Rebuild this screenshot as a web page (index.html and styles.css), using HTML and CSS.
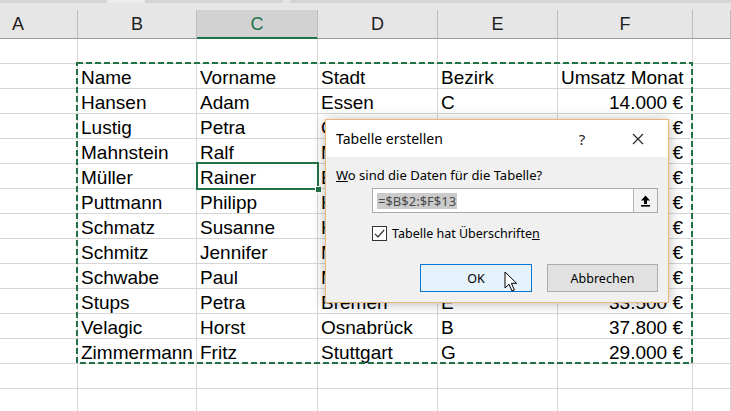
FILE: index.html
```html
<!DOCTYPE html>
<html lang="de">
<head>
<meta charset="utf-8">
<title>Tabelle erstellen</title>
<link rel="stylesheet" href="styles.css">
</head>
<body>
<div class="app">
  <div class="strip"></div>
  <div class="colhead">
    <div class="ha">A</div><div>B</div><div class="sel">C</div><div>D</div><div>E</div><div>F</div><div></div>
  </div>
  <div class="grid">
    <div></div><div></div><div></div><div></div><div></div><div></div><div></div>
    <div></div><div>Name</div><div>Vorname</div><div>Stadt</div><div>Bezirk</div><div>Umsatz Monat</div><div></div>
    <div></div><div>Hansen</div><div>Adam</div><div>Essen</div><div>C</div><div class="num">14.000 €</div><div></div>
    <div></div><div>Lustig</div><div>Petra</div><div>Oberhausen</div><div>A</div><div class="num">21.500 €</div><div></div>
    <div></div><div>Mahnstein</div><div>Ralf</div><div>München</div><div>D</div><div class="num">18.200 €</div><div></div>
    <div></div><div>Müller</div><div>Rainer</div><div>Essen</div><div>C</div><div class="num">25.000 €</div><div></div>
    <div></div><div>Puttmann</div><div>Philipp</div><div>Hamburg</div><div>F</div><div class="num">31.400 €</div><div></div>
    <div></div><div>Schmatz</div><div>Susanne</div><div>Hannover</div><div>B</div><div class="num">19.800 €</div><div></div>
    <div></div><div>Schmitz</div><div>Jennifer</div><div>Mainz</div><div>A</div><div class="num">27.300 €</div><div></div>
    <div></div><div>Schwabe</div><div>Paul</div><div>München</div><div>D</div><div class="num">22.600 €</div><div></div>
    <div></div><div>Stups</div><div>Petra</div><div>Bremen</div><div>E</div><div class="num">33.500 €</div><div></div>
    <div></div><div>Velagic</div><div>Horst</div><div>Osnabrück</div><div>B</div><div class="num">37.800 €</div><div></div>
    <div></div><div>Zimmermann</div><div>Fritz</div><div>Stuttgart</div><div>G</div><div class="num">29.000 €</div><div></div>
    <div></div><div></div><div></div><div></div><div></div><div></div><div></div>
    <div></div><div></div><div></div><div></div><div></div><div></div><div></div>
  </div>

  <svg class="marquee" width="619" height="303" viewBox="0 0 619 303">
    <rect x="1" y="1" width="615" height="300" fill="none" stroke="#217346" stroke-width="2" stroke-dasharray="6 3"/>
  </svg>

  <div class="active"><span class="handle"></span></div>

  <div class="dialog">
    <div class="dtitle">
      <span class="t">Tabelle erstellen</span>
      <span class="help">?</span>
      <span class="close">
        <svg width="12" height="12" viewBox="0 0 12 12"><path d="M1 1 L11 11 M11 1 L1 11" stroke="#222" stroke-width="1.1" fill="none"/></svg>
      </span>
    </div>
    <div class="dbody">
      <div class="q"><u>W</u>o sind die Daten für die Tabelle?</div>
      <div class="inputrow">
        <span class="range">=$B$2:$F$13</span>
        <span class="collapse">
          <svg width="11" height="12" viewBox="0 0 11 12"><path d="M5.5 0.5 L10 5.5 L7 5.5 L7 9 L4 9 L4 5.5 L1 5.5 Z" fill="#000"/><rect x="1" y="10" width="9" height="1.6" fill="#000"/></svg>
        </span>
      </div>
      <div class="checkrow">
        <span class="box">
          <svg width="13" height="13" viewBox="0 0 13 13"><path d="M2 6.8 L5 9.8 L11.2 2.8" stroke="#222" stroke-width="1.2" fill="none"/></svg>
        </span>
        <span class="lbl">Tabelle hat Überschrifte<u>n</u></span>
      </div>
      <div class="btnrow">
        <span class="btn ok">OK</span>
        <span class="btn">Abbrechen</span>
      </div>
    </div>
  </div>

  <svg class="cursor" width="14" height="22" viewBox="0 0 14 22">
    <path d="M1 1 L1 17 L5 13.2 L8 20 L10.4 19 L7.4 12.3 L12.6 12.3 Z" fill="#fff" stroke="#000" stroke-width="1" stroke-linejoin="miter"/>
  </svg>
</div>
</body>
</html>
```
FILE: styles.css
```css
* { box-sizing: border-box; }
html, body { margin: 0; padding: 0; }
body {
  background: #fff;
  font-family: "Liberation Sans", Arial, sans-serif;
  color: #000;
}
.app {
  position: relative;
  width: 731px;
  height: 411px;
  overflow: hidden;
  background: #fff;
}
.strip {
  height: 3px;
  background: linear-gradient(to right, #d4d4d4 0 107px, #ececec 107px 145px, #d4d4d4 145px 283px, #e4e4e4 283px 290px, #d4d4d4 290px);
}
.colhead {
  display: grid;
  grid-template-columns: 78px 119px 121px 120px 120px 135px 38px;
  background: #e6e6e6;
  padding-top: 7px;
}
.colhead div {
  height: 29px;
  border-right: 1px solid #bcbcbc;
  border-bottom: 1px solid #9c9c9c;
  font-size: 18px;
  line-height: 28px;
  text-align: center;
  color: #1e1e1e;
}
.colhead .ha { text-align: left; padding-left: 12px; }
.colhead .sel {
  background: #d2d2d2;
  color: #217346;
  border-bottom-color: #217346;
  box-shadow: inset 0 -1px 0 #217346;
}
.grid {
  display: grid;
  grid-template-columns: 78px 119px 121px 120px 120px 135px 38px;
  grid-auto-rows: 25px;
}
.grid > div {
  border-right: 1px solid #d6d6d6;
  border-bottom: 1px solid #d6d6d6;
  font-size: 19px;
  line-height: 21px;
  padding: 3px 4px 0 3px;
  white-space: nowrap;
  overflow: hidden;
}
.grid > .num { text-align: right; padding-right: 9px; }

.marquee {
  position: absolute;
  left: 76px;
  top: 62px;
}
.active {
  position: absolute;
  left: 196px;
  top: 162px;
  width: 123px;
  height: 28px;
  border: 2px solid #217346;
}
.handle {
  position: absolute;
  right: -5px;
  bottom: -5px;
  width: 7px;
  height: 7px;
  background: #217346;
  border: 1px solid #fff;
}

.dialog {
  position: absolute;
  left: 325px;
  top: 119px;
  width: 344px;
  height: 184px;
  background: #f0f0f0;
  border: 1px solid #e8b87c;
  box-shadow: 0 1px 12px rgba(0, 0, 0, 0.28);
  font-family: "Noto Sans", "Open Sans", sans-serif;
  color: #000;
}
.dtitle {
  height: 37px;
  background: #fff;
  display: flex;
  align-items: center;
  padding-left: 10px;
  font-size: 14px;
}
.dtitle .t { flex: 1; }
.help {
  width: 46px;
  text-align: center;
  margin-right: 10px;
  font-size: 15px;
  color: #222;
}
.close {
  width: 46px;
  margin-right: 7px;
  display: flex;
  justify-content: center;
}
.dbody {
  padding: 10px 10px 0 10px;
}
.q {
  font-size: 13px;
  line-height: 16px;
}
.inputrow {
  margin: 5px 0 0 36px;
  width: 286px;
  height: 25px;
  display: flex;
  align-items: center;
  border: 1px solid #a9a9a9;
  background: #fff;
}
.range {
  margin-left: 4px;
  background: #cbcbcb;
  color: #4a4a4a;
  font-size: 13px;
  line-height: 16px;
  padding: 0 1px;
}
.collapse {
  margin-left: auto;
  width: 24px;
  height: 23px;
  border-left: 1px solid #b5b5b5;
  background: #f2f2f2;
  display: flex;
  align-items: center;
  justify-content: center;
}
.checkrow {
  margin: 13px 0 0 36px;
  height: 15px;
  display: flex;
  align-items: center;
}
.box {
  width: 15px;
  height: 15px;
  border: 1px solid #333;
  background: #fff;
  display: flex;
  align-items: center;
  justify-content: center;
}
.lbl {
  margin-left: 5px;
  font-size: 12.5px;
  line-height: 15px;
}
.btnrow {
  margin-top: 23px;
  display: flex;
  justify-content: flex-end;
  gap: 15px;
}
.btn {
  width: 111px;
  height: 28px;
  background: #e1e1e1;
  border: 1px solid #adadad;
  font-size: 12.5px;
  display: flex;
  align-items: center;
  justify-content: center;
}
.btn.ok {
  width: 112px;
  background: #e5f1fb;
  border-color: #0078d7;
}
.cursor {
  position: absolute;
  left: 504px;
  top: 271px;
}
```
